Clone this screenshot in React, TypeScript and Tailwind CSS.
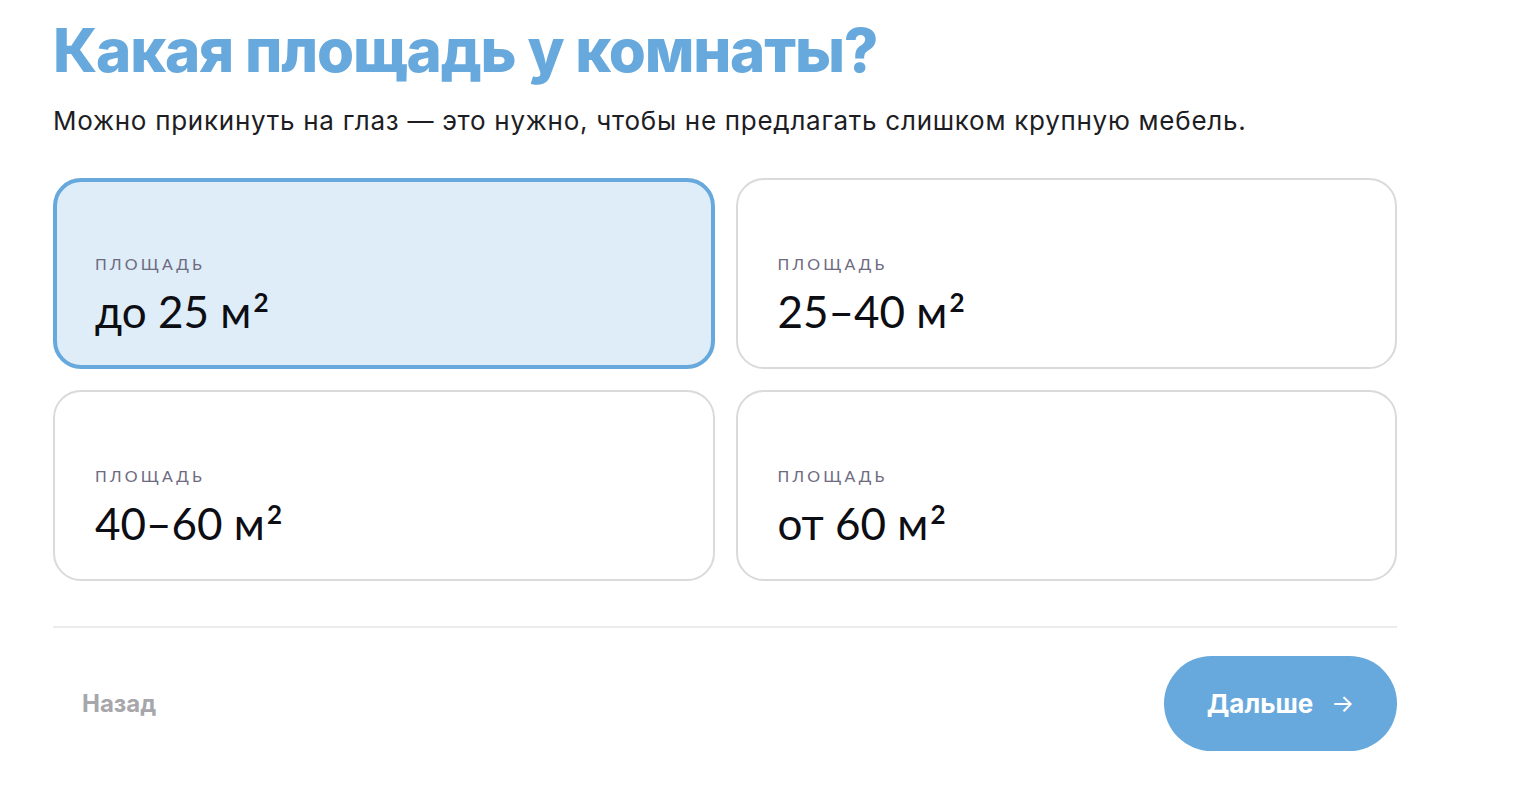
import React, { useState } from 'react';

// Шаг опроса: выбор площади комнаты.

const options = ['до 25 м', '25–40 м', '40–60 м', 'от 60 м'];

const AreaCard: React.FC<{ value: string; selected: boolean; onSelect: () => void }> = ({
  value,
  selected,
  onSelect,
}) => (
  <button
    onClick={onSelect}
    className={
      selected
        ? 'flex flex-col justify-end h-[191px] rounded-[28px] border-4 border-[#67a9dc] bg-[#deedf8] px-[38px] pb-[29px] text-left'
        : 'flex flex-col justify-end h-[191px] rounded-[28px] border-2 border-[#dadada] bg-white px-10 pb-[31px] text-left'
    }
  >
    <span className="text-[16px] leading-[20px] tracking-[0.2em] uppercase text-[#6e6a80]">Площадь</span>
    <span className="mt-[12px] text-[44px] leading-[50px] text-[#0d0d14]">
      {value}
      <span className="ml-[2px] align-super font-bold text-[26px] leading-[0]">2</span>
    </span>
  </button>
);

export default function App() {
  const [selected, setSelected] = useState(0);

  return (
    <div className="min-h-screen bg-white font-['Lato','Noto_Sans',sans-serif]">
      <div className="w-[1344px] ml-[53px] pt-[14px]">
        {/* Заголовок */}
        <h1 className="font-['Inter',sans-serif] text-[60px] leading-[72px] font-extrabold tracking-[-0.02em] text-[#67a9dc]">
          Какая площадь у комнаты?
        </h1>
        <p className="mt-[18px] font-['Inter',sans-serif] text-[26px] leading-[34px] tracking-[0.028em] text-[#1d1d24]">
          Можно прикинуть на глаз — это нужно, чтобы не предлагать слишком крупную мебель.
        </p>

        {/* Варианты */}
        <div className="mt-[40px] grid grid-cols-2 gap-[21px]">
          {options.map((o, i) => (
            <AreaCard key={o} value={o} selected={selected === i} onSelect={() => setSelected(i)} />
          ))}
        </div>

        <div className="mt-[45px] h-[2px] bg-[#ececec]" />

        {/* Навигация */}
        <div className="mt-[28px] flex items-center justify-between font-['Inter',sans-serif]">
          <button className="ml-[29px] text-[24px] font-bold text-[#a6a6ab]">Назад</button>
          <button className="flex items-center gap-[18px] h-[95px] w-[233px] justify-center rounded-full bg-[#67a9dc] text-[26px] font-bold text-white">
            Дальше
            <span className="font-normal text-[24px]">→</span>
          </button>
        </div>
      </div>
    </div>
  );
}
